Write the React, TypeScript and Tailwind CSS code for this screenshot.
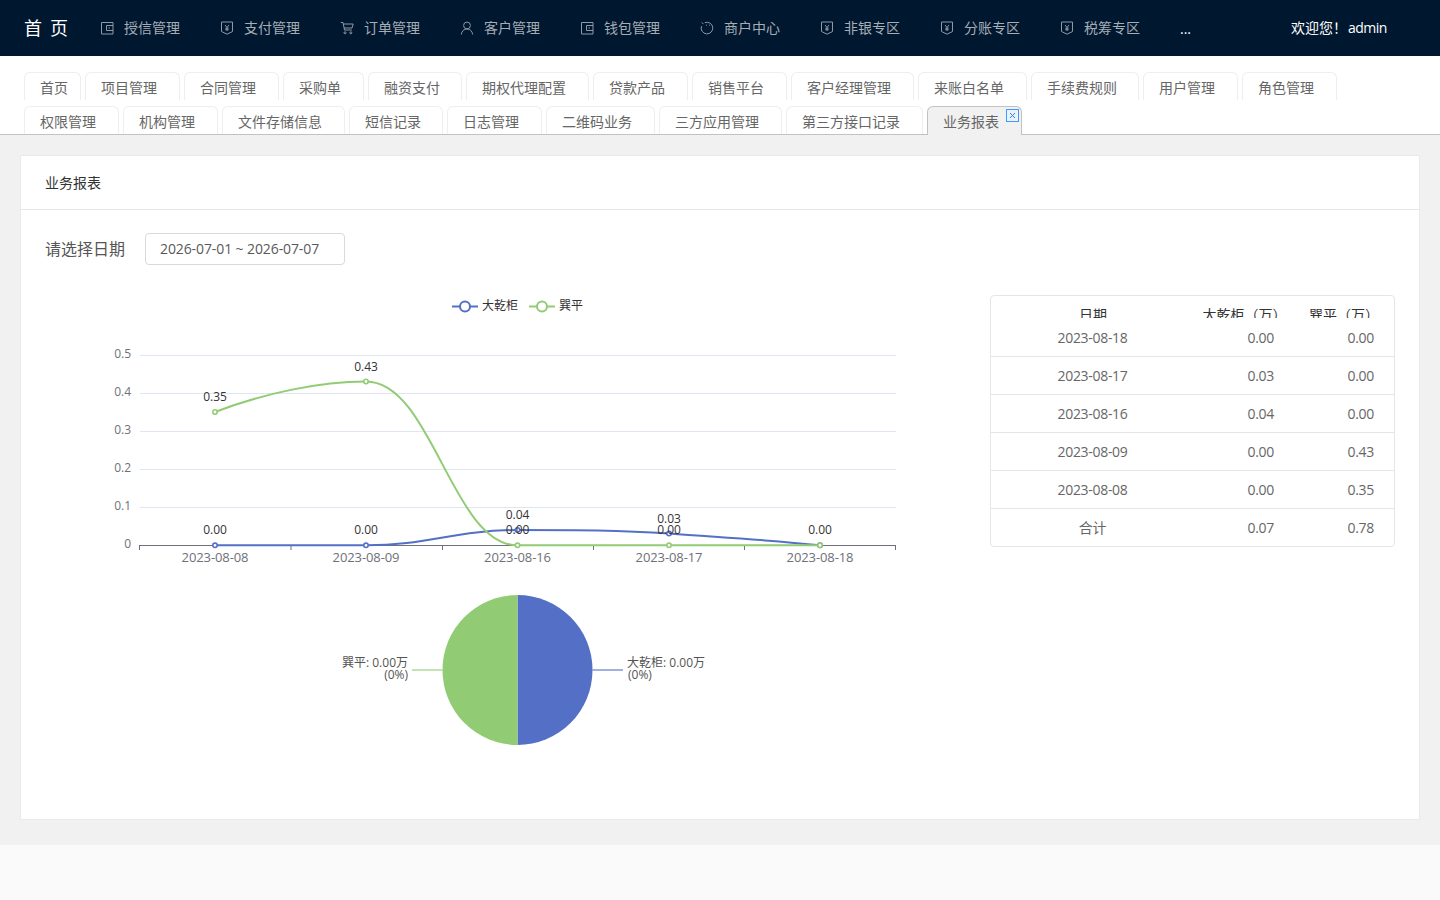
import React from "react";

const F = '"Open Sans","Noto Sans CJK SC",sans-serif';

function Wallet() {
  return (
    <svg width="14" height="14" viewBox="0 0 14 14" fill="none" stroke="currentColor" strokeWidth="1">
      <path d="M1.5 1.5h11.5v11.5h-11.5z" />
      <path d="M13 4.5H6.5v5H13" />
      <path d="M8.5 7h1.5" />
    </svg>
  );
}
function Shield() {
  return (
    <svg width="14" height="14" viewBox="0 0 14 14" fill="none" stroke="currentColor" strokeWidth="1">
      <path d="M1.5 1h11v9.500L7 13.200 1.500 10.500z" />
      <path d="M5 4l2 2.500L9 4M7 6.500V10M5.300 7.200h3.400M5.300 8.700h3.400" />
    </svg>
  );
}
function Cart() {
  return (
    <svg width="14" height="14" viewBox="0 0 14 14" fill="none" stroke="currentColor" strokeWidth="1">
      <path d="M.8 1.500h2.200l1.500 7.500h7.300" />
      <path d="M3.200 3h10l-1.200 4H4" />
      <circle cx="5" cy="11.800" r="1" />
      <circle cx="10.800" cy="11.800" r="1" />
    </svg>
  );
}
function UserI() {
  return (
    <svg width="14" height="14" viewBox="0 0 14 14" fill="none" stroke="currentColor" strokeWidth="1">
      <circle cx="7" cy="4.500" r="3.400" />
      <path d="M1.300 13.500C1.800 10 4 8 7 8s5.200 2 5.700 5.500" />
    </svg>
  );
}
function Loop() {
  return (
    <svg width="14" height="14" viewBox="0 0 14 14" fill="none" stroke="currentColor" strokeWidth="1">
      <path d="M4.800 1.700A5.800 5.800 0 1 1 1.500 5.200" />
      <path d="M1.800 1.500l1.600 1.600" />
      <path d="M6 4.200h.9M9 4.200h.9" />
    </svg>
  );
}

const NAV: [string, React.ReactNode][] = [
  ["授信管理", <Wallet />],
  ["支付管理", <Shield />],
  ["订单管理", <Cart />],
  ["客户管理", <UserI />],
  ["钱包管理", <Wallet />],
  ["商户中心", <Loop />],
  ["非银专区", <Shield />],
  ["分账专区", <Shield />],
  ["税筹专区", <Shield />],
];

const ROW1: [string, number][] = [
  ["首页", 57],
  ["项目管理", 95],
  ["合同管理", 95],
  ["采购单", 81],
  ["融资支付", 94],
  ["期权代理配置", 123],
  ["贷款产品", 95],
  ["销售平台", 95],
  ["客户经理管理", 123],
  ["来账白名单", 109],
  ["手续费规则", 108],
  ["用户管理", 95],
  ["角色管理", 95],
];
const ROW2: [string, number][] = [
  ["权限管理", 95],
  ["机构管理", 95],
  ["文件存储信息", 123],
  ["短信记录", 94],
  ["日志管理", 95],
  ["二维码业务", 109],
  ["三方应用管理", 123],
  ["第三方接口记录", 137],
];

function Tab({ label, width }: { label: string; width: number }) {
  return (
    <div
      className="h-[28px] shrink-0 rounded-t-[6px] border border-b-0 border-[#eeeeee] bg-white pl-[15px] text-[14px] leading-[30px] text-[#666666] whitespace-nowrap overflow-hidden"
      style={{ width }}
    >
      {label}
    </div>
  );
}

const ROWS = [
  ["2023-08-18", "0.00", "0.00"],
  ["2023-08-17", "0.03", "0.00"],
  ["2023-08-16", "0.04", "0.00"],
  ["2023-08-09", "0.00", "0.43"],
  ["2023-08-08", "0.00", "0.35"],
  ["合计", "0.07", "0.78"],
];

const X = [215, 366, 517.5, 669, 820];

function LineChart() {
  const g = [355, 393, 431, 469, 507];
  const yl = ["0.5", "0.4", "0.3", "0.2", "0.1", "0"];
  const val = (x: number, y: number, t: string) => (
    <text key={t + x + y} x={x} y={y} textAnchor="middle" fontSize="12" fill="#333333">
      {t}
    </text>
  );
  return (
    <svg width="945" height="290" viewBox="45 285 945 290" style={{ fontFamily: F }} className="block">
      <path d="M452 306.500h26" stroke="#5470c6" strokeWidth="2" />
      <circle cx="465" cy="306.500" r="5" fill="#fff" stroke="#5470c6" strokeWidth="2" />
      <text x="482" y="310" fontSize="12" fill="#333333">大乾柜</text>
      <path d="M529 306.500h26" stroke="#91cc75" strokeWidth="2" />
      <circle cx="542" cy="306.500" r="5" fill="#fff" stroke="#91cc75" strokeWidth="2" />
      <text x="559" y="310" fontSize="12" fill="#333333">巽平</text>

      {g.map((y) => (
        <path key={y} d={`M140 ${y + 0.5}H896`} stroke="#e0e6f1" />
      ))}
      {yl.map((t, i) => (
        <text key={t} x="131" y={358 + i * 38} textAnchor="end" fontSize="12" fill="#6e7079">
          {t}
        </text>
      ))}
      <path d="M139.500 545.500H896M139.500 545v5M291 545v5M442.500 545v5M593.500 545v5M744.500 545v5M895.500 545v5" stroke="#6e7079" fill="none" />
      {["2023-08-08", "2023-08-09", "2023-08-16", "2023-08-17", "2023-08-18"].map((t, i) => (
        <text key={t} x={X[i]} y="562" textAnchor="middle" fontSize="13" letterSpacing="-0.1" fill="#6e7079">
          {t}
        </text>
      ))}

      <path
        d="M215 545.300H366C427 545.300 456 530 517.500 530C577 530 620 530 669 533.600C730 538 770 540 820 545.300"
        fill="none"
        stroke="#5470c6"
        strokeWidth="2"
      />
      <path
        d="M215 412C265 393 320 381.500 366 381.500C432 381.500 452 545.300 517.500 545.300H820"
        fill="none"
        stroke="#91cc75"
        strokeWidth="2"
      />
      {X.map((x, i) => (
        <circle key={"b" + i} cx={x} cy={i === 2 ? 530 : i === 3 ? 533.6 : 545.3} r="2.200" fill="#fff" stroke="#5470c6" strokeWidth="1.600" />
      ))}
      {X.map((x, i) => (
        <circle key={"g" + i} cx={x} cy={[412, 381.5, 545.3, 545.3, 545.3][i]} r="2.200" fill="#fff" stroke="#91cc75" strokeWidth="1.600" />
      ))}
      {val(215, 401, "0.35")}
      {val(366, 371, "0.43")}
      {val(215, 534, "0.00")}
      {val(366, 534, "0.00")}
      {val(517.5, 519, "0.04")}
      {val(517.5, 534, "0.00")}
      {val(669, 523, "0.03")}
      {val(669, 534, "0.00")}
      {val(820, 534, "0.00")}
    </svg>
  );
}

function PieChart() {
  return (
    <svg width="945" height="180" viewBox="45 585 945 180" style={{ fontFamily: F }} className="block">
      <path d="M517.500 595a75 75 0 0 1 0 150z" fill="#5470c6" />
      <path d="M517.500 595a75 75 0 0 0 0 150z" fill="#91cc75" />
      <path d="M592.500 670H623" stroke="#5470c6" strokeOpacity="0.55" strokeWidth="2" />
      <path d="M412 670h30.500" stroke="#91cc75" strokeOpacity="0.55" strokeWidth="2" />
      <text x="627" y="667" fontSize="12" fill="#555555">大乾柜: 0.00万</text>
      <text x="628" y="679" fontSize="12" fill="#555555">(0%)</text>
      <text x="408" y="667" textAnchor="end" fontSize="12" fill="#555555">巽平: 0.00万</text>
      <text x="408" y="679" textAnchor="end" fontSize="12" fill="#555555">(0%)</text>
    </svg>
  );
}

export default function App() {
  return (
    <div className="min-h-[900px] w-[1440px] bg-[#fafafa] flex flex-col" style={{ fontFamily: F }}>
      <header className="h-[56px] bg-[#001730] flex items-center text-[14px] text-[#a6adb4]">
        <div className="w-[100px] pl-[24px] text-[18px] text-white flex gap-[8px]">
          <span>首</span>
          <span>页</span>
        </div>
        {NAV.map(([label, icon]) => (
          <div key={label} className="w-[120px] flex items-center shrink-0">
            <span className="w-[24px] flex text-[#8f98a3]">{icon}</span>
            <span className="whitespace-nowrap pb-[2px]">{label}</span>
          </div>
        ))}
        <div className="w-[111px] text-white text-[14px] leading-none pt-[1px]">...</div>
        <div className="text-white whitespace-nowrap pb-[2px]">
          欢迎您！<span className="ml-[1px] tracking-[-0.5px]">admin</span>
        </div>
      </header>

      <div className="bg-white pl-[24px] pt-[16px] h-[79px] border-b border-[#c2c2c2] flex flex-col gap-[6px]">
        <div className="flex gap-[4px]">
          {ROW1.map(([t, w]) => (
            <Tab key={t} label={t} width={w} />
          ))}
        </div>
        <div className="flex gap-[4px] relative">
          {ROW2.map(([t, w]) => (
            <Tab key={t} label={t} width={w} />
          ))}
          <div className="relative z-10 h-[29px] w-[95px] shrink-0 rounded-t-[6px] border border-b-0 border-[#c2c2c2] bg-[#f1f1f1] pl-[15px] text-[14px] leading-[30px] text-[#666666] whitespace-nowrap">
            业务报表
            <span className="absolute right-[2px] top-[2px] w-[13px] h-[13px] border border-[#3b9bff] bg-[#e8f3ff] flex items-center justify-center">
              <svg width="7" height="7" viewBox="0 0 7 7" stroke="#3a7fd0" strokeWidth="1" fill="none">
                <path d="M1 1l5 5M6 1L1 6" />
              </svg>
            </span>
          </div>
        </div>
      </div>

      <main className="bg-[#f1f1f1] h-[710px] px-[20px] pt-[20px]">
        <section className="h-[665px] bg-white border border-[#eaeaea]">
          <div className="h-[54px] border-b border-[#e6e6e6] pl-[24px] flex items-center text-[14px] text-[#333333]">业务报表</div>
          <div className="pl-[24px] pt-[23px] flex items-center h-[55px]">
            <label className="w-[100px] text-[16px] leading-none text-[#555555]">请选择日期</label>
            <div className="w-[200px] h-[32px] border border-[#d9d9d9] rounded-[4px] pl-[14px] pb-[2px] flex items-center text-[14px] tracking-[-0.1px] text-[#595959]">
              2026-07-01 ~ 2026-07-07
            </div>
          </div>
          <div className="flex pl-[24px] pt-[20px]">
            <div className="w-[945px] shrink-0 flex flex-col gap-[10px]">
              <LineChart />
              <PieChart />
            </div>
            <div className="w-[405px] h-[252px] mt-[10px] border border-[#e6e6e6] rounded-[4px] text-[14px] text-[#666666] self-start">
              <div className="h-[22px] overflow-hidden grid grid-cols-[204px_99px_100px] text-center text-[#333333] leading-[38px]">
                <div>日期</div>
                <div>大乾柜（万）</div>
                <div>巽平（万）</div>
              </div>
              {ROWS.map((r, i) => (
                <div
                  key={r[0]}
                  className={`grid grid-cols-[204px_99px_100px] items-center tracking-[-0.3px] ${
                    i === 0 ? "h-[39px] border-b border-[#e6e6e6]" : i < 5 ? "h-[38px] border-b border-[#e6e6e6]" : "h-[37px]"
                  }`}
                >
                  <div className="text-center pr-[1px]">{r[0]}</div>
                  <div className="text-right pr-[20px]">{r[1]}</div>
                  <div className="text-right pr-[20px]">{r[2]}</div>
                </div>
              ))}
            </div>
          </div>
        </section>
      </main>
    </div>
  );
}
